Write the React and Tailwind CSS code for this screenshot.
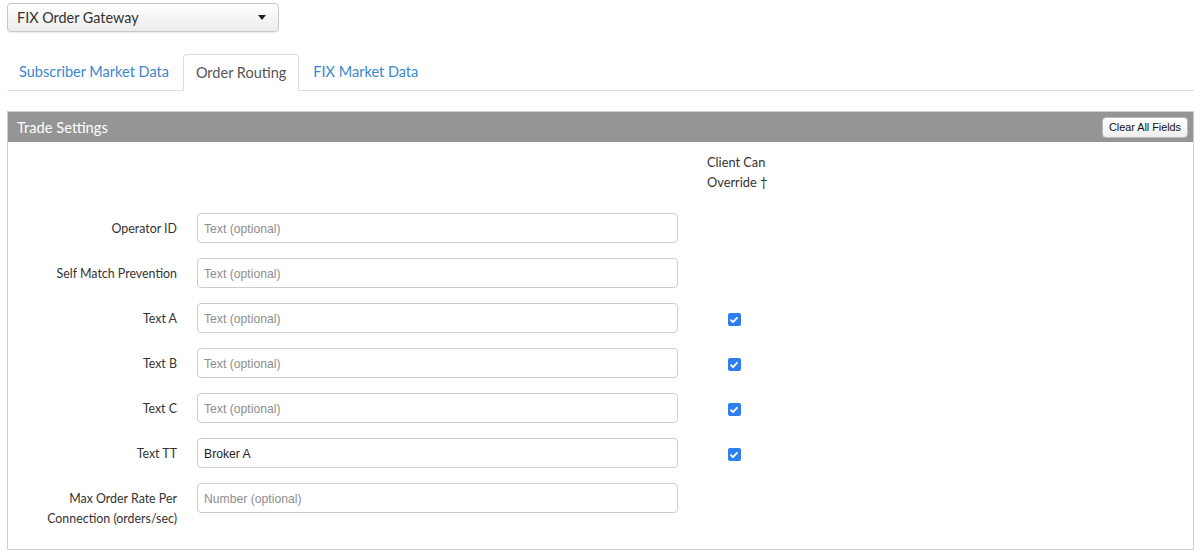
import { useState } from 'react';

const fields = [
  { label: 'Operator ID', placeholder: 'Text (optional)' },
  { label: 'Self Match Prevention', placeholder: 'Text (optional)' },
  { label: 'Text A', placeholder: 'Text (optional)', override: true },
  { label: 'Text B', placeholder: 'Text (optional)', override: true },
  { label: 'Text C', placeholder: 'Text (optional)', override: true },
  { label: 'Text TT', placeholder: 'Text (optional)', value: 'Broker A', override: true },
  { label: ['Max Order Rate Per', 'Connection (orders/sec)'], placeholder: 'Number (optional)' },
];

const tabs = ['Subscriber Market Data', 'Order Routing', 'FIX Market Data'];

function Check({ checked }) {
  if (!checked) return null;
  return (
    <span className="flex h-[13px] w-[13px] items-center justify-center rounded-[2px] bg-[#2f7ef0]">
      <svg viewBox="0 0 12 12" className="h-[10px] w-[10px]" fill="none" stroke="white" strokeWidth="2.2" strokeLinecap="round" strokeLinejoin="round">
        <path d="M2.5 6.3l2.3 2.3L9.6 3.4" />
      </svg>
    </span>
  );
}

export default function App() {
  const [active, setActive] = useState(1);

  return (
    <div className="min-h-[555px] bg-white px-[7px] pt-[3px] text-[#333] font-['Lato','Noto_Sans',sans-serif]">
      {/* gateway picker */}
      <div className="flex h-[29px] w-[272px] items-center justify-between rounded-[4px] border border-[#c8c8c8] bg-gradient-to-b from-white to-[#ececec] pl-[9px] pr-[12px] shadow-[0_1px_1px_rgba(0,0,0,0.08)]">
        <span className="text-[14.4px]">FIX Order Gateway</span>
        <svg viewBox="0 0 8 5" className="h-[5px] w-[8px]" fill="#222">
          <path d="M0 0h8L4 5z" />
        </svg>
      </div>

      {/* tabs */}
      <div className="mt-[22px] flex border-b border-[#ddd]">
        {tabs.map((t, i) => (
          <button
            key={t}
            onClick={() => setActive(i)}
            className={
              i === active
                ? 'mr-[2px] -mb-px h-[37px] rounded-t-[4px] border border-[#ddd] border-b-white bg-white px-[12px] text-[14.5px] text-[#555]'
                : 'mr-[2px] h-[36px] px-[12px] text-[14.5px] text-[#3a87cd]'
            }
          >
            {t}
          </button>
        ))}
      </div>

      {/* panel */}
      <div className="mt-[20px] border border-[#cfcfcf] bg-white">
        <div className="flex h-[30px] items-center justify-between bg-[#959595] pl-[9px] pr-[5px]">
          <span className="text-[14.7px] text-white">Trade Settings</span>
          <button className="h-[21px] rounded-[4px] border border-[#bbb] bg-gradient-to-b from-white to-[#efefef] px-[6px] text-[10.8px] text-[#111] font-['Liberation_Sans',Arial,sans-serif]">
            Clear All Fields
          </button>
        </div>

        <div className="pt-[10px] pb-[20px] text-[12.4px]">
          <div className="flex">
            <div className="w-[699px]" />
            <div className="leading-[20px] text-[12.8px]">
              <div>Client Can</div>
              <div>Override †</div>
            </div>
          </div>

          <div className="mt-[21px] flex flex-col gap-[15px]">
            {fields.map((f, i) => (
              <div key={i} className="flex items-start">
                <div className="w-[169px] pt-[6px] text-right leading-[20px]">
                  {Array.isArray(f.label) ? f.label.map((l) => <div key={l}>{l}</div>) : f.label}
                </div>
                <input
                  defaultValue={f.value}
                  placeholder={f.placeholder}
                  className="ml-[20px] h-[30px] w-[481px] rounded-[4px] border border-[#cdcdcd] px-[6px] pt-[1px] text-[12.2px] text-[#222] placeholder-[#8e8e8e] outline-none font-['Liberation_Sans',Arial,sans-serif]"
                />
                <div className="ml-[30px] flex h-[30px] w-[52px] items-center justify-center pt-[3px]">
                  <Check checked={f.override} />
                </div>
              </div>
            ))}
          </div>
        </div>
      </div>
    </div>
  );
}
